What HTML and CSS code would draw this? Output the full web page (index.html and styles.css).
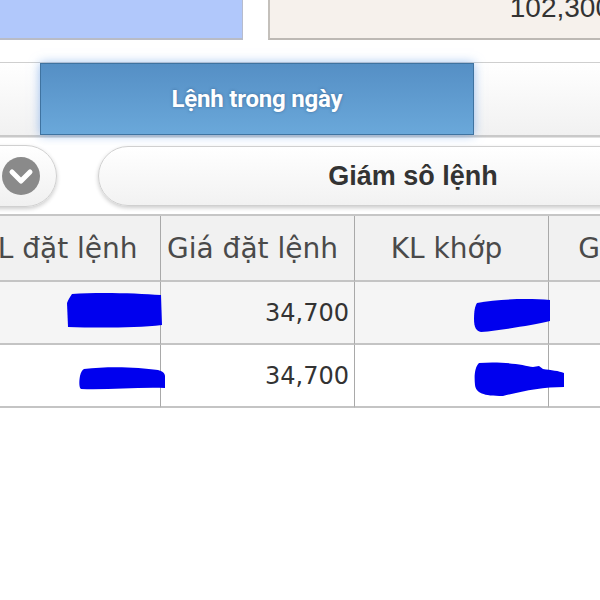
FILE: index.html
```html
<!DOCTYPE html>
<html lang="vi">
<head>
  <meta charset="UTF-8" />
  <title>Lệnh trong ngày</title>
  <link rel="stylesheet" href="styles.css">
</head>
<body>

<div class="summary">
  <div class="account"></div>
  <div class="balance"><span>102,300</span></div>
</div>

<div class="tabs">
  <div class="tab active">Lệnh trong ngày</div>
</div>

<div class="actions">
  <div class="toggle">
    <svg width="40" height="40" viewBox="0 0 40 40">
      <circle cx="20" cy="20" r="19" fill="#8a8a8a"/>
      <path d="M11 16 L20 25 L29 16" fill="none" stroke="#fff" stroke-width="5" stroke-linecap="round" stroke-linejoin="round"/>
    </svg>
  </div>
  <div class="monitor">Giám sô lệnh</div>
</div>

<div class="orders">
  <div class="cell head">KL đặt lệnh</div>
  <div class="cell head">Giá đặt lệnh</div>
  <div class="cell head">KL khớp</div>
  <div class="cell head">Giá khớp</div>

  <div class="cell num odd">
    <svg class="mark m1" width="96" height="38" viewBox="0 0 96 38">
      <path d="M6 3 C30 1 70 2 95 4 L96 34 C70 37 30 37 2 36 L1 12 C2 9 4 6 6 3 Z" fill="#0000ee"/>
    </svg>
  </div>
  <div class="cell num odd">34,700</div>
  <div class="cell num odd">
    <svg class="mark m2" width="78" height="36" viewBox="0 0 78 36">
      <path d="M4 6 C25 2 55 1 77 3 L77 24 C60 28 30 33 8 35 C3 34 1 30 1 22 C1 14 2 9 4 6 Z" fill="#0000ee"/>
    </svg>
  </div>
  <div class="cell num odd"></div>

  <div class="cell num">
    <svg class="mark m3" width="88" height="24" viewBox="0 0 88 24">
      <path d="M6 3 C30 0 60 1 80 4 C84 5 87 7 87 10 L87 22 C60 21 30 24 3 23 C1 22 1 15 2 10 C3 6 4 4 6 3 Z" fill="#0000ee"/>
    </svg>
  </div>
  <div class="cell num">34,700</div>
  <div class="cell num">
    <svg class="mark m4" width="92" height="36" viewBox="0 0 92 36">
      <path d="M6 2 C30 0 50 4 60 6 L66 5 L70 8 C78 9 86 10 91 12 L91 26 C70 26 50 30 30 35 C10 35 3 32 2 24 C1 14 2 6 6 2 Z" fill="#0000ee"/>
    </svg>
  </div>
  <div class="cell num"></div>
</div>

</body>
</html>
```

FILE: styles.css
```css
body {
  margin: 0;
  background-color: #fff;
  font-family: 'DejaVu Sans', sans-serif;
  color: #444;
  overflow: hidden;
  width: 600px;
  height: 600px;
}
.summary {
  display: flex;
  height: 40px;
  gap: 25px;
}
.account {
  width: 243px;
  background-color: #b1c8fb;
  border-right: 1px solid #b7bccd;
  border-bottom: 2px solid #b9bcc6;
  box-sizing: border-box;
}
.balance {
  flex: 1;
  background-color: #f6f1ec;
  border-left: 2px solid #c4c0bb;
  border-bottom: 2px solid #bdb9b4;
  box-sizing: border-box;
  overflow: hidden;
  display: flex;
  justify-content: flex-end;
  align-items: flex-end;
}
.balance span {
  font-family: 'Liberation Sans', sans-serif;
  font-size: 28px;
  line-height: 28px;
  color: #333;
  margin-right: -11px;
  margin-bottom: 16px;
}
.tabs {
  margin-top: 22px;
  height: 72px;
  border-top: 1px solid #cfcfcf;
  border-bottom: 2px solid #c9c9c9;
  background: linear-gradient(#ffffff, #f1f1f1);
  display: flex;
}
.tab {
  margin-left: 40px;
  width: 434px;
  box-sizing: border-box;
  border: 1px solid #3f73a0;
  background: linear-gradient(#558fc5, #6aa8da);
  box-shadow: 0 0 10px rgba(90, 150, 230, 0.6);
  color: #fff;
  font-family: 'Roboto', sans-serif;
  font-weight: bold;
  font-size: 24px;
  letter-spacing: -0.2px;
  text-shadow: 0 0 3px rgba(30, 60, 100, 0.5);
  display: flex;
  justify-content: center;
  align-items: center;
}
.actions {
  display: flex;
  align-items: center;
  height: 76px;
  border-top: 1px solid #e2e2e2;
}
.toggle {
  flex-shrink: 0;
  margin-left: -42px;
  width: 99px;
  height: 62px;
  box-sizing: border-box;
  border: 1px solid #d0d0d0;
  border-radius: 31px;
  background: linear-gradient(#ffffff, #f0f0f0);
  box-shadow: 0 2px 4px rgba(0, 0, 0, 0.2);
  display: flex;
  justify-content: flex-end;
  align-items: center;
  padding-right: 15px;
}
.monitor {
  margin-left: 41px;
  width: 630px;
  flex-shrink: 0;
  height: 60px;
  box-sizing: border-box;
  border: 1px solid #d0d0d0;
  border-radius: 30px;
  background: linear-gradient(#ffffff, #f2f2f2);
  box-shadow: 0 2px 4px rgba(0, 0, 0, 0.2);
  font-family: 'Liberation Sans', sans-serif;
  font-weight: bold;
  font-size: 27px;
  color: #333;
  display: flex;
  justify-content: center;
  align-items: center;
}
.orders {
  display: grid;
  grid-template-columns: 194px 194px 194px 194px;
  grid-template-rows: 66px 63px 63px;
  margin-left: -33px;
  border-top: 2px solid #c6c6c6;
}
.cell {
  display: flex;
  align-items: center;
  border-right: 1px solid #a9a9a9;
  border-bottom: 2px solid #c4c4c4;
  box-sizing: border-box;
  overflow: visible;
}
.head {
  justify-content: center;
  padding-right: 10px;
  background-color: #f1f1f1;
  font-size: 28px;
  color: #4a4a4a;
}
.num {
  justify-content: flex-end;
  padding-right: 5px;
  font-size: 24px;
  color: #333;
}
.odd {
  background-color: #f5f5f5;
}
.mark {
  flex-shrink: 0;
  position: relative;
  z-index: 1;
}
.m1 {
  margin-right: -7px;
  margin-top: -6px;
}
.m2 {
  margin-right: -8px;
  margin-top: 4px;
}
.m3 {
  margin-right: -11px;
  margin-top: 4px;
}
.m4 {
  margin-right: -22px;
  margin-top: 6px;
}
```
